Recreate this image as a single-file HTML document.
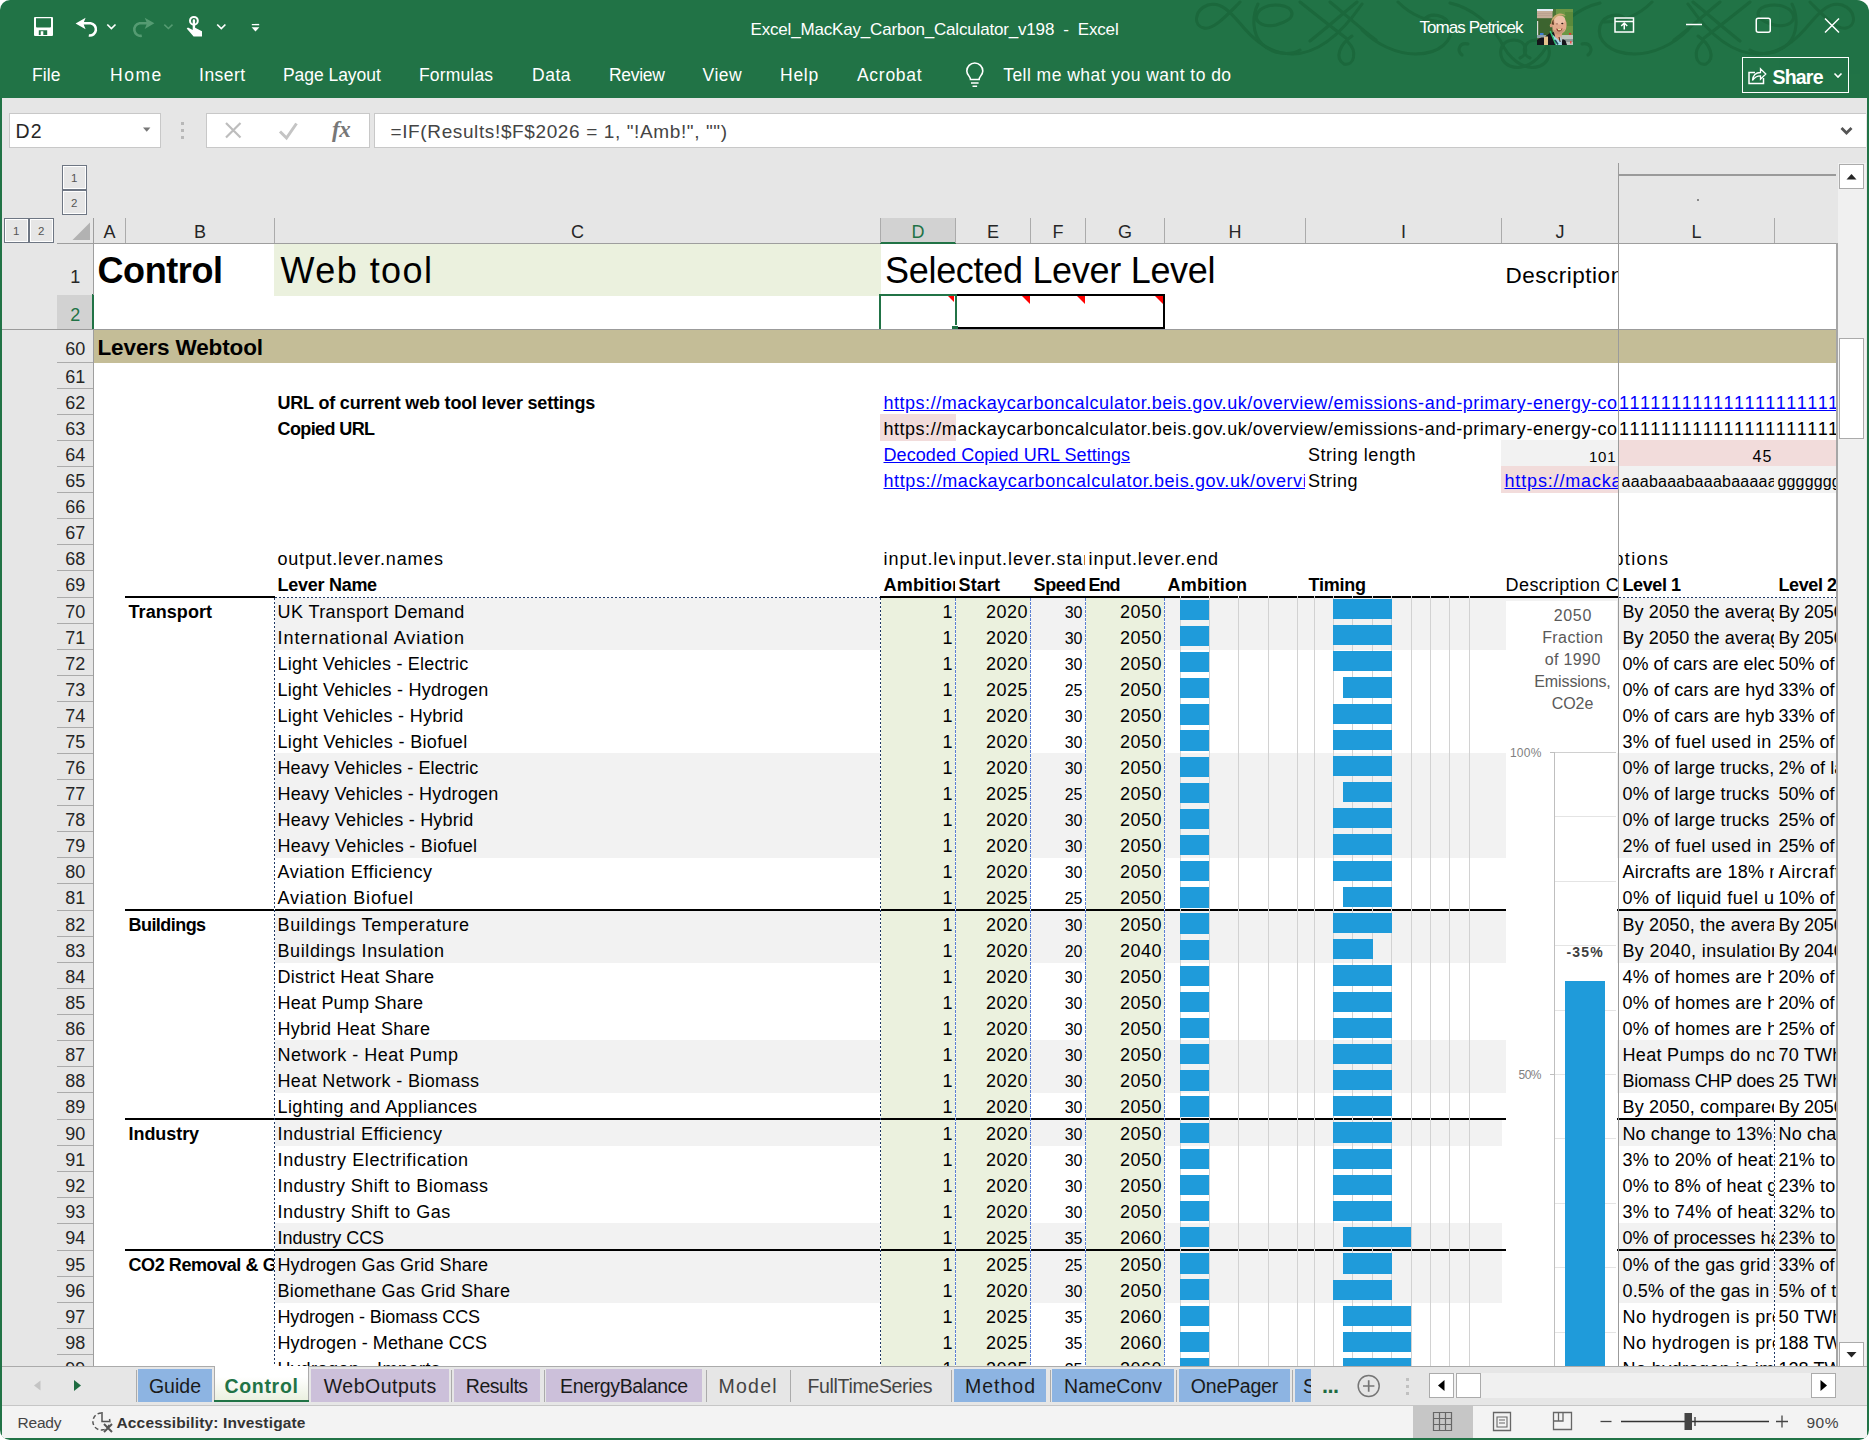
<!DOCTYPE html>
<html><head><meta charset="utf-8"><title>Excel_MacKay_Carbon_Calculator_v198 - Excel</title>
<style>
html,body{margin:0;padding:0;background:#fff;}
body{width:1869px;height:1440px;overflow:hidden;position:relative;font-family:"Liberation Sans",sans-serif;color:#000;}
#win{position:absolute;left:0;top:0;width:1869px;height:1440px;background:#217346;border-radius:10px 12px 10px 10px;overflow:hidden;}
#win div{position:absolute;white-space:nowrap;}
#win svg{position:absolute;overflow:visible;}
.cl{overflow:hidden;}
</style></head><body><div id="win">
<div style="left:2px;top:98px;width:1865px;height:1340px;background:#E6E6E6;"></div><svg style="left:1180px;top:0" width="690" height="98" viewBox="1180 0 690 98" fill="none" stroke="#1B673B" stroke-width="3" stroke-linecap="round" opacity="0.9">
<g><path d="M1240 2C1228 14 1214 30 1204 28C1193 26 1194 10 1208 5C1222 1 1232 14 1244 28C1256 42 1272 54 1292 54C1320 54 1344 30 1362 4"/>
<path d="M1292 14C1292 4 1270 2 1260 10C1250 20 1262 28 1276 25C1286 22 1292 18 1292 14"/>
<path d="M1258 4C1252 16 1252 34 1262 44C1272 54 1290 56 1300 50"/>
<path d="M1300 2C1315 14 1330 26 1346 38"/>
<path d="M1357 2C1340 16 1324 30 1310 41"/>
<path d="M1330 2C1345 14 1362 30 1376 40"/>
<path d="M1352 36C1340 44 1334 58 1344 64C1354 66 1358 52 1348 42"/>
<path d="M1362 30C1376 44 1396 54 1416 54C1440 54 1454 40 1450 26C1446 14 1430 12 1424 20"/>
<path d="M1398 2C1408 12 1424 22 1446 22"/>
<path d="M1450 3C1472 8 1490 24 1500 40C1508 58 1524 72 1540 66C1554 60 1552 40 1536 40C1524 40 1520 54 1530 58"/>
<path d="M1468 44C1460 42 1456 50 1462 55"/></g><g transform="translate(3050 0) scale(-1 1)"><path d="M1240 2C1228 14 1214 30 1204 28C1193 26 1194 10 1208 5C1222 1 1232 14 1244 28C1256 42 1272 54 1292 54C1320 54 1344 30 1362 4"/>
<path d="M1292 14C1292 4 1270 2 1260 10C1250 20 1262 28 1276 25C1286 22 1292 18 1292 14"/>
<path d="M1258 4C1252 16 1252 34 1262 44C1272 54 1290 56 1300 50"/>
<path d="M1300 2C1315 14 1330 26 1346 38"/>
<path d="M1357 2C1340 16 1324 30 1310 41"/>
<path d="M1330 2C1345 14 1362 30 1376 40"/>
<path d="M1352 36C1340 44 1334 58 1344 64C1354 66 1358 52 1348 42"/>
<path d="M1362 30C1376 44 1396 54 1416 54C1440 54 1454 40 1450 26C1446 14 1430 12 1424 20"/>
<path d="M1398 2C1408 12 1424 22 1446 22"/>
<path d="M1450 3C1472 8 1490 24 1500 40C1508 58 1524 72 1540 66C1554 60 1552 40 1536 40C1524 40 1520 54 1530 58"/>
<path d="M1468 44C1460 42 1456 50 1462 55"/></g>
</svg><svg style="left:0;top:0" width="300" height="50" viewBox="0 0 300 50" fill="none" stroke="#fff" stroke-width="2">
<!-- save -->
<path d="M35 17h17a1 1 0 0 1 1 1v17a1 1 0 0 1 -1 1h-17a1 1 0 0 1 -1-1v-17a1 1 0 0 1 1-1z M36 18.300v8.300a1 1 0 0 0 1 1h13a1 1 0 0 0 1-1v-8.300z M38.800 30.200v4.800h1.900v-3.800h2.600v3.800h3.900v-4.800z" fill="#fff" stroke="none" fill-rule="evenodd"/>
<!-- undo -->
<path d="M75.700 23.500l9.800-5.700-2.300 4.300h5.300" stroke="none" fill="none"/>
<path d="M75.600 23.500l10-5.800-1.800 4.500v2.600l1.800 4.500z" fill="#fff" stroke="none"/>
<path d="M83 23.200h7.600a6.200 6.200 0 0 1 -1.800 12.300" stroke-width="2.600"/>
<path d="M107.300 24.500l4.100 4 4.100-4" stroke-width="1.700"/>
<!-- redo (dim) -->
<g stroke="#559B72" fill="#559B72">
<path d="M154.400 23.300l-9.700-5.500 1.800 4.300v2.600l-1.800 4.300z" stroke="none"/>
<path d="M147 23.200h-7.400a6.300 6.300 0 0 0 2.200 12.600" stroke-width="2.600" fill="none"/>
<path d="M164.300 24.600l4.100 3.900 4.100-3.900" stroke-width="1.500" fill="none"/>
</g>
<!-- touch -->
<circle cx="193.900" cy="20.800" r="3.900" stroke-width="2"/>
<path d="M192.700 20.500a1.200 1.200 0 0 1 2.400 0v7.300l6.900 3.400v5.300h-8.400l-6.900-8 1.300-1 4.700 2.600z" fill="#fff" stroke="none"/>
<path d="M217.200 24.500l4.100 4 4.100-4" stroke-width="1.700"/>
<!-- customize -->
<path d="M251.800 24.600h7.400" stroke-width="1.400"/>
<path d="M251.600 27.300h7.800l-3.900 4.200z" fill="#fff" stroke="none"/>
</svg><div style="left:750.5px;top:20px;font-size:17px;line-height:19px;letter-spacing:-0.18px;color:#fff;white-space:pre;">Excel_MacKay_Carbon_Calculator_v198  -  Excel</div><div style="left:1419.5px;top:18px;font-size:17px;line-height:19px;letter-spacing:-0.94px;color:#fff;">Tomas Petricek</div><svg style="left:1537px;top:9px" width="36" height="36" viewBox="0 0 36 36">
<rect width="36" height="36" fill="#4B7436"/>
<rect x="19" y="0" width="17" height="27" fill="#6C9645"/>
<rect x="28" y="3" width="8" height="14" fill="#5B8A3B"/>
<rect x="0" y="8" width="15" height="18" fill="#3C642F"/>
<rect x="0" y="0" width="16" height="2.200" fill="#E4ECF6"/>
<rect x="0" y="2" width="15.500" height="7.200" fill="#C5AD99"/>
<rect x="0" y="4" width="15" height="0.600" fill="#B49C8A"/><rect x="0" y="6" width="15" height="0.600" fill="#B49C8A"/>
<rect x="23" y="26" width="13" height="10" fill="#BEC4BE"/>
<rect x="26" y="30" width="10" height="3" fill="#8E9A96"/>
<rect x="32" y="24" width="2.200" height="1.600" fill="#E8302E"/><rect x="33" y="32" width="1.500" height="2.500" fill="#E8504A"/>
<rect x="0" y="12" width="1.200" height="14" fill="#D9DCD6"/>
<rect x="3" y="24" width="3.500" height="2.500" fill="#3E7ED0"/>
<rect x="0" y="26" width="9" height="3" fill="#8FA0A8"/>
<path d="M0 36v-5c2-2 4-2.500 6-2.500h1l6-4.500 5-1 6 13z" fill="#15151B"/>
<path d="M24 36l1.500-6 3 1.500 1.500 4.500z" fill="#15151B"/>
<rect x="7" y="27.500" width="4" height="8.500" fill="#E3C28C"/>
<path d="M16.500 21l8.500 3-1 12h-4z" fill="#DDA184"/>
<path d="M15 25l4 11h6l-1-10-1.500 6z" fill="#A8D7E8"/>
<path d="M22 28l1.200 5" stroke="#4A2A1C" stroke-width="1"/>
<path d="M13.200 22l5.600 13.500" stroke="#2FCB78" stroke-width="1.400" fill="none"/>
<path d="M18 31l3 4.500" stroke="#1E4E5A" stroke-width="1.600" fill="none"/>
<ellipse cx="22.300" cy="16" rx="7.300" ry="9.300" fill="#E2A98C"/>
<ellipse cx="22.800" cy="11" rx="5.500" ry="4.500" fill="#EDBFA6"/>
<path d="M15 20c1.500 4 4.500 6 7.500 5.500 2.500-0.500 4.500-3 5.500-6-3 2.500-9 3-13 0.500z" fill="#C9977A"/>
<path d="M14.300 15c-0.600-4.500 2-8.500 6.500-10 3.500-1 6.500 0 8 2-4-1.500-8-0.500-10.500 2-1.800 1.800-2.500 4-2.500 6z" fill="#CBAA72"/>
<path d="M14.800 15.500c0-2 0.600-4 1.800-5.200-0.200 2 0 3.800 0.500 5.500z" fill="#5E3C24"/>
<ellipse cx="14" cy="16.500" rx="1.200" ry="2" fill="#D99C80"/>
<ellipse cx="25.300" cy="14.500" rx="1.100" ry="0.800" fill="#2A1915"/>
<ellipse cx="20" cy="14.800" rx="0.900" ry="0.600" fill="#8A5A4A"/>
<path d="M19.300 19.500c2 1 4.500 1 6.200-0.300-0.500 2.300-2 3.300-3.500 3.300-1.400 0-2.400-1.200-2.700-3z" fill="#7C2B24"/>
<rect x="20.800" y="20" width="3.400" height="1.300" fill="#E7DE9C"/>
</svg><svg style="left:1600px;top:0" width="269" height="50" viewBox="1600 0 269 50" fill="none" stroke="#fff" stroke-width="1.500">
<rect x="1615" y="18" width="18.500" height="14" />
<path d="M1615 21.500h18.500" />
<path d="M1624.250 29.500v-6M1621.250 26l3-3 3 3" />
<path d="M1686 24.500h16"/>
<rect x="1756.250" y="18.250" width="14" height="14" rx="2"/>
<path d="M1825 18.500l14 14M1839 18.500l-14 14"/>
</svg><div style="left:31.9px;top:65px;font-size:17.5px;line-height:20px;letter-spacing:0.10px;color:#fff;">File</div><div style="left:110.1px;top:65px;font-size:17.5px;line-height:20px;letter-spacing:1.47px;color:#fff;">Home</div><div style="left:199.1px;top:65px;font-size:17.5px;line-height:20px;letter-spacing:0.43px;color:#fff;">Insert</div><div style="left:283.0px;top:65px;font-size:17.5px;line-height:20px;letter-spacing:-0.05px;color:#fff;">Page Layout</div><div style="left:418.9px;top:65px;font-size:17.5px;line-height:20px;letter-spacing:0.18px;color:#fff;">Formulas</div><div style="left:532.1px;top:65px;font-size:17.5px;line-height:20px;letter-spacing:0.48px;color:#fff;">Data</div><div style="left:608.9px;top:65px;font-size:17.5px;line-height:20px;letter-spacing:-0.28px;color:#fff;">Review</div><div style="left:702.5px;top:65px;font-size:17.5px;line-height:20px;letter-spacing:0.53px;color:#fff;">View</div><div style="left:780.1px;top:65px;font-size:17.5px;line-height:20px;letter-spacing:0.70px;color:#fff;">Help</div><div style="left:856.9px;top:65px;font-size:17.5px;line-height:20px;letter-spacing:0.75px;color:#fff;">Acrobat</div><div style="left:1003.2px;top:65px;font-size:17.5px;line-height:20px;letter-spacing:0.46px;color:#fff;">Tell me what you want to do</div><svg style="left:960px;top:60px" width="30" height="30" viewBox="960 60 30 30" fill="none" stroke="#fff" stroke-width="1.600">
<path d="M970.500 79.500c0-3-3.700-4.500-3.700-8.500a8 8 0 0 1 16 0c0 4-3.700 5.500-3.700 8.500z"/>
<path d="M971 83h7.600M972.500 86.300h4.600"/>
</svg><div style="left:1742px;top:57px;width:107px;height:36px;border:1px solid #fff;box-sizing:border-box;"></div><div style="left:1772.5px;top:66px;font-size:19.5px;line-height:22px;letter-spacing:-0.80px;font-weight:bold;color:#fff;">Share</div><svg style="left:1745px;top:60px" width="100" height="30" viewBox="1745 60 100 30" fill="none" stroke="#fff" stroke-width="1.500">
<path d="M1755 72.500h-6v11h14.500v-5.500"/>
<path d="M1752.500 80.500c0.500-5.500 3.500-8 8-8v-3.800l5.300 5.300-5.300 5.300v-3.500c-3.500 0-6 1.500-8 4.700z" stroke-width="1.300"/>
<path d="M1834.500 73.500l3.500 3.500 3.500-3.500" stroke-width="1.600"/>
</svg><div style="left:9px;top:113px;width:152px;height:35px;background:#fff;border:1px solid #C8C8C8;box-sizing:border-box;"></div><div style="left:15.5px;top:120px;font-size:19.5px;line-height:22px;letter-spacing:1.07px;color:#262626;">D2</div><svg style="left:140px;top:125px" width="14" height="10" viewBox="140 125 14 10"><path d="M143 127.500h7.400l-3.700 4.200z" fill="#777"/></svg><div style="left:181px;top:122px;width:3px;height:3px;background:#B8B8B8;"></div><div style="left:181px;top:129px;width:3px;height:3px;background:#B8B8B8;"></div><div style="left:181px;top:136px;width:3px;height:3px;background:#B8B8B8;"></div><div style="left:206px;top:113px;width:164px;height:35px;background:#fff;border:1px solid #C8C8C8;box-sizing:border-box;"></div><svg style="left:206px;top:113px" width="164" height="35" viewBox="206 113 164 35" fill="none" stroke="#BDBDBD" stroke-width="2.200">
<path d="M226 123l14.500 14.500M240.500 123l-14.500 14.500"/>
<path d="M280 131.500l6.500 6.500 10-14.500" stroke="#C4C4C4" stroke-width="3"/>
</svg><div style="left:332px;top:115px;font-family:'Liberation Serif',serif;font-style:italic;font-weight:bold;font-size:23px;line-height:30px;color:#777;letter-spacing:-0.5px;">fx</div><div style="left:374px;top:113px;width:1492px;height:35px;background:#fff;border:1px solid #C8C8C8;border-right:none;box-sizing:border-box;"></div><div style="left:390.5px;top:121px;font-size:19px;line-height:21px;letter-spacing:0.62px;color:#444;">=IF(Results!$F$2026 = 1, "!Amb!", "")</div><svg style="left:1838px;top:122px" width="18" height="16" viewBox="1838 122 18 16"><path d="M1841.500 128l5 5 5-5" fill="none" stroke="#555" stroke-width="2.800"/></svg><div style="left:62px;top:165px;width:25px;height:25px;background:#E6E6E6;border:1px solid #6E7683;box-sizing:border-box;box-shadow:inset 0 0 0 1px #fff;"></div><div style="left:71.0px;top:172px;font-size:11.5px;line-height:12px;letter-spacing:-0.04px;color:#555;">1</div><div style="left:62px;top:190px;width:25px;height:25px;background:#E6E6E6;border:1px solid #6E7683;box-sizing:border-box;box-shadow:inset 0 0 0 1px #fff;"></div><div style="left:71.0px;top:197px;font-size:11.5px;line-height:12px;letter-spacing:-0.04px;color:#555;">2</div><div style="left:4px;top:218px;width:25px;height:25px;background:#E6E6E6;border:1px solid #6E7683;box-sizing:border-box;box-shadow:inset 0 0 0 1px #fff;"></div><div style="left:13.0px;top:225px;font-size:11.5px;line-height:12px;letter-spacing:-0.04px;color:#555;">1</div><div style="left:29px;top:218px;width:25px;height:25px;background:#E6E6E6;border:1px solid #6E7683;box-sizing:border-box;box-shadow:inset 0 0 0 1px #fff;"></div><div style="left:38.0px;top:225px;font-size:11.5px;line-height:12px;letter-spacing:-0.04px;color:#555;">2</div><div style="left:1619px;top:174px;width:217px;height:2px;background:#9A9A9A;"></div><div style="left:1696.5px;top:199px;width:2px;height:2px;background:#8A8A8A;"></div><div style="left:57px;top:243px;width:1780px;height:1px;background:#9E9E9E;"></div><svg style="left:72px;top:222px" width="20" height="20" viewBox="72 222 20 20"><path d="M90 222.500v17.500h-17.500z" fill="#B2B2B2"/></svg><div style="left:881px;top:218px;width:75px;height:25px;background:#D2D2D2;"></div><div style="left:880px;top:242px;width:76px;height:2px;background:#217346;"></div><div style="left:125px;top:218px;width:1px;height:25px;background:#ABABAB;"></div><div style="left:103.5px;top:222px;font-size:18px;line-height:20px;letter-spacing:-0.01px;color:#262626;">A</div><div style="left:274px;top:218px;width:1px;height:25px;background:#ABABAB;"></div><div style="left:194.0px;top:222px;font-size:18px;line-height:20px;letter-spacing:-1.01px;color:#262626;">B</div><div style="left:880px;top:218px;width:1px;height:25px;background:#ABABAB;"></div><div style="left:571.0px;top:222px;font-size:18px;line-height:20px;letter-spacing:-1.60px;color:#262626;">C</div><div style="left:955px;top:218px;width:1px;height:25px;background:#ABABAB;"></div><div style="left:911.5px;top:222px;font-size:18px;line-height:20px;letter-spacing:-1.00px;color:#217346;">D</div><div style="left:1030px;top:218px;width:1px;height:25px;background:#ABABAB;"></div><div style="left:987.0px;top:222px;font-size:18px;line-height:20px;letter-spacing:-1.60px;color:#262626;">E</div><div style="left:1085px;top:218px;width:1px;height:25px;background:#ABABAB;"></div><div style="left:1052.5px;top:222px;font-size:18px;line-height:20px;letter-spacing:-1.60px;color:#262626;">F</div><div style="left:1164px;top:218px;width:1px;height:25px;background:#ABABAB;"></div><div style="left:1118.0px;top:222px;font-size:18px;line-height:20px;letter-spacing:-1.00px;color:#262626;">G</div><div style="left:1305px;top:218px;width:1px;height:25px;background:#ABABAB;"></div><div style="left:1228.5px;top:222px;font-size:18px;line-height:20px;letter-spacing:-1.00px;color:#262626;">H</div><div style="left:1501px;top:218px;width:1px;height:25px;background:#ABABAB;"></div><div style="left:1401.0px;top:222px;font-size:18px;line-height:20px;letter-spacing:-0.00px;color:#262626;">I</div><div style="left:1618px;top:218px;width:1px;height:25px;background:#ABABAB;"></div><div style="left:1555.5px;top:222px;font-size:18px;line-height:20px;letter-spacing:-1.60px;color:#262626;">J</div><div style="left:1774px;top:218px;width:1px;height:25px;background:#ABABAB;"></div><div style="left:1691.5px;top:222px;font-size:18px;line-height:20px;letter-spacing:-1.60px;color:#262626;">L</div><div style="left:57px;top:295px;width:36px;height:34px;background:#D2D2D2;"></div><div style="left:92px;top:294px;width:2px;height:35px;background:#217346;"></div><div class="cl" style="left:2px;top:244px;width:92px;height:1122px;"><div style="left:-2px;top:-244px;"><div style="left:70.2px;top:267px;font-size:18px;line-height:20px;letter-spacing:-0.01px;color:#262626;">1</div><div style="left:70.2px;top:305px;font-size:18px;line-height:20px;letter-spacing:-0.01px;color:#217346;">2</div><div style="left:57px;top:362px;width:36px;height:1px;background:#ABABAB;"></div><div style="left:65.2px;top:339px;font-size:18px;line-height:20px;letter-spacing:-0.02px;color:#262626;">60</div><div style="left:57px;top:388px;width:36px;height:1px;background:#ABABAB;"></div><div style="left:65.2px;top:367px;font-size:18px;line-height:20px;letter-spacing:-0.02px;color:#262626;">61</div><div style="left:57px;top:414px;width:36px;height:1px;background:#ABABAB;"></div><div style="left:65.2px;top:393px;font-size:18px;line-height:20px;letter-spacing:-0.02px;color:#262626;">62</div><div style="left:57px;top:440px;width:36px;height:1px;background:#ABABAB;"></div><div style="left:65.2px;top:419px;font-size:18px;line-height:20px;letter-spacing:-0.02px;color:#262626;">63</div><div style="left:57px;top:466px;width:36px;height:1px;background:#ABABAB;"></div><div style="left:65.2px;top:445px;font-size:18px;line-height:20px;letter-spacing:-0.02px;color:#262626;">64</div><div style="left:57px;top:492px;width:36px;height:1px;background:#ABABAB;"></div><div style="left:65.2px;top:471px;font-size:18px;line-height:20px;letter-spacing:-0.02px;color:#262626;">65</div><div style="left:57px;top:518px;width:36px;height:1px;background:#ABABAB;"></div><div style="left:65.2px;top:497px;font-size:18px;line-height:20px;letter-spacing:-0.02px;color:#262626;">66</div><div style="left:57px;top:544px;width:36px;height:1px;background:#ABABAB;"></div><div style="left:65.2px;top:523px;font-size:18px;line-height:20px;letter-spacing:-0.02px;color:#262626;">67</div><div style="left:57px;top:570px;width:36px;height:1px;background:#ABABAB;"></div><div style="left:65.2px;top:549px;font-size:18px;line-height:20px;letter-spacing:-0.02px;color:#262626;">68</div><div style="left:57px;top:597px;width:36px;height:1px;background:#ABABAB;"></div><div style="left:65.2px;top:575px;font-size:18px;line-height:20px;letter-spacing:-0.02px;color:#262626;">69</div><div style="left:57px;top:623px;width:36px;height:1px;background:#ABABAB;"></div><div style="left:65.2px;top:602px;font-size:18px;line-height:20px;letter-spacing:-0.02px;color:#262626;">70</div><div style="left:57px;top:649px;width:36px;height:1px;background:#ABABAB;"></div><div style="left:65.2px;top:628px;font-size:18px;line-height:20px;letter-spacing:-0.02px;color:#262626;">71</div><div style="left:57px;top:675px;width:36px;height:1px;background:#ABABAB;"></div><div style="left:65.2px;top:654px;font-size:18px;line-height:20px;letter-spacing:-0.02px;color:#262626;">72</div><div style="left:57px;top:701px;width:36px;height:1px;background:#ABABAB;"></div><div style="left:65.2px;top:680px;font-size:18px;line-height:20px;letter-spacing:-0.02px;color:#262626;">73</div><div style="left:57px;top:727px;width:36px;height:1px;background:#ABABAB;"></div><div style="left:65.2px;top:706px;font-size:18px;line-height:20px;letter-spacing:-0.02px;color:#262626;">74</div><div style="left:57px;top:753px;width:36px;height:1px;background:#ABABAB;"></div><div style="left:65.2px;top:732px;font-size:18px;line-height:20px;letter-spacing:-0.02px;color:#262626;">75</div><div style="left:57px;top:779px;width:36px;height:1px;background:#ABABAB;"></div><div style="left:65.2px;top:758px;font-size:18px;line-height:20px;letter-spacing:-0.02px;color:#262626;">76</div><div style="left:57px;top:805px;width:36px;height:1px;background:#ABABAB;"></div><div style="left:65.2px;top:784px;font-size:18px;line-height:20px;letter-spacing:-0.02px;color:#262626;">77</div><div style="left:57px;top:831px;width:36px;height:1px;background:#ABABAB;"></div><div style="left:65.2px;top:810px;font-size:18px;line-height:20px;letter-spacing:-0.02px;color:#262626;">78</div><div style="left:57px;top:857px;width:36px;height:1px;background:#ABABAB;"></div><div style="left:65.2px;top:836px;font-size:18px;line-height:20px;letter-spacing:-0.02px;color:#262626;">79</div><div style="left:57px;top:883px;width:36px;height:1px;background:#ABABAB;"></div><div style="left:65.2px;top:862px;font-size:18px;line-height:20px;letter-spacing:-0.02px;color:#262626;">80</div><div style="left:57px;top:910px;width:36px;height:1px;background:#ABABAB;"></div><div style="left:65.2px;top:888px;font-size:18px;line-height:20px;letter-spacing:-0.02px;color:#262626;">81</div><div style="left:57px;top:936px;width:36px;height:1px;background:#ABABAB;"></div><div style="left:65.2px;top:915px;font-size:18px;line-height:20px;letter-spacing:-0.02px;color:#262626;">82</div><div style="left:57px;top:962px;width:36px;height:1px;background:#ABABAB;"></div><div style="left:65.2px;top:941px;font-size:18px;line-height:20px;letter-spacing:-0.02px;color:#262626;">83</div><div style="left:57px;top:988px;width:36px;height:1px;background:#ABABAB;"></div><div style="left:65.2px;top:967px;font-size:18px;line-height:20px;letter-spacing:-0.02px;color:#262626;">84</div><div style="left:57px;top:1014px;width:36px;height:1px;background:#ABABAB;"></div><div style="left:65.2px;top:993px;font-size:18px;line-height:20px;letter-spacing:-0.02px;color:#262626;">85</div><div style="left:57px;top:1040px;width:36px;height:1px;background:#ABABAB;"></div><div style="left:65.2px;top:1019px;font-size:18px;line-height:20px;letter-spacing:-0.02px;color:#262626;">86</div><div style="left:57px;top:1066px;width:36px;height:1px;background:#ABABAB;"></div><div style="left:65.2px;top:1045px;font-size:18px;line-height:20px;letter-spacing:-0.02px;color:#262626;">87</div><div style="left:57px;top:1092px;width:36px;height:1px;background:#ABABAB;"></div><div style="left:65.2px;top:1071px;font-size:18px;line-height:20px;letter-spacing:-0.02px;color:#262626;">88</div><div style="left:57px;top:1119px;width:36px;height:1px;background:#ABABAB;"></div><div style="left:65.2px;top:1097px;font-size:18px;line-height:20px;letter-spacing:-0.02px;color:#262626;">89</div><div style="left:57px;top:1145px;width:36px;height:1px;background:#ABABAB;"></div><div style="left:65.2px;top:1124px;font-size:18px;line-height:20px;letter-spacing:-0.02px;color:#262626;">90</div><div style="left:57px;top:1171px;width:36px;height:1px;background:#ABABAB;"></div><div style="left:65.2px;top:1150px;font-size:18px;line-height:20px;letter-spacing:-0.02px;color:#262626;">91</div><div style="left:57px;top:1197px;width:36px;height:1px;background:#ABABAB;"></div><div style="left:65.2px;top:1176px;font-size:18px;line-height:20px;letter-spacing:-0.02px;color:#262626;">92</div><div style="left:57px;top:1223px;width:36px;height:1px;background:#ABABAB;"></div><div style="left:65.2px;top:1202px;font-size:18px;line-height:20px;letter-spacing:-0.02px;color:#262626;">93</div><div style="left:57px;top:1250px;width:36px;height:1px;background:#ABABAB;"></div><div style="left:65.2px;top:1228px;font-size:18px;line-height:20px;letter-spacing:-0.02px;color:#262626;">94</div><div style="left:57px;top:1276px;width:36px;height:1px;background:#ABABAB;"></div><div style="left:65.2px;top:1255px;font-size:18px;line-height:20px;letter-spacing:-0.02px;color:#262626;">95</div><div style="left:57px;top:1302px;width:36px;height:1px;background:#ABABAB;"></div><div style="left:65.2px;top:1281px;font-size:18px;line-height:20px;letter-spacing:-0.02px;color:#262626;">96</div><div style="left:57px;top:1328px;width:36px;height:1px;background:#ABABAB;"></div><div style="left:65.2px;top:1307px;font-size:18px;line-height:20px;letter-spacing:-0.02px;color:#262626;">97</div><div style="left:57px;top:1354px;width:36px;height:1px;background:#ABABAB;"></div><div style="left:65.2px;top:1333px;font-size:18px;line-height:20px;letter-spacing:-0.02px;color:#262626;">98</div><div style="left:65.2px;top:1359px;font-size:18px;line-height:20px;letter-spacing:-0.02px;color:#262626;">99</div></div></div><div style="left:93px;top:218px;width:1px;height:77px;background:#9E9E9E;"></div><div style="left:93px;top:329px;width:1px;height:1037px;background:#9E9E9E;"></div><div style="left:1838px;top:163px;width:28px;height:1204px;background:#F0F0F0;"></div><div style="left:1839px;top:164px;width:25px;height:25px;background:#fff;border:1px solid #ABABAB;box-sizing:border-box;"></div><div style="left:1839px;top:1342px;width:25px;height:25px;background:#fff;border:1px solid #ABABAB;box-sizing:border-box;"></div><div style="left:1839px;top:338px;width:25px;height:101px;background:#fff;border:1px solid #ABABAB;box-sizing:border-box;"></div><svg style="left:1839px;top:164px" width="25" height="1203" viewBox="1839 164 25 1203" fill="#262626">
<path d="M1846.500 179.500l5-5.500 5 5.500z"/><path d="M1846.500 1352l5 5.500 5-5.500z"/></svg><div style="left:2px;top:1366px;width:1865px;height:1px;background:#ABABAB;"></div><div style="left:2px;top:1367px;width:1865px;height:39px;background:#E6E6E6;"></div><div style="left:2px;top:1405px;width:1865px;height:1px;background:#C6C6C6;"></div><svg style="left:30px;top:1376px" width="60" height="20" viewBox="30 1376 60 20">
<path d="M40.500 1380.500v10l-6.500-5z" fill="#C4C4C4"/><path d="M74 1380v11l7-5.500z" fill="#1E6B41"/></svg><div style="left:136px;top:1370px;width:1px;height:32px;background:#ABABAB;"></div><div style="left:138px;top:1369px;width:74px;height:33px;background:#8DB4E2;"></div><div style="left:148.9px;top:1375px;font-size:19.5px;line-height:22px;letter-spacing:0.02px;color:#1a1a1a;">Guide</div><div style="left:311px;top:1369px;width:138px;height:33px;background:#CCC0DA;"></div><div style="left:323.8px;top:1375px;font-size:19.5px;line-height:22px;letter-spacing:0.49px;color:#1a1a1a;">WebOutputs</div><div style="left:454px;top:1369px;width:86px;height:33px;background:#CCC0DA;"></div><div style="left:465.8px;top:1375px;font-size:19.5px;line-height:22px;letter-spacing:-0.45px;color:#1a1a1a;">Results</div><div style="left:546px;top:1369px;width:156px;height:33px;background:#CCC0DA;"></div><div style="left:560.0px;top:1375px;font-size:19.5px;line-height:22px;letter-spacing:-0.35px;color:#1a1a1a;">EnergyBalance</div><div style="left:954px;top:1369px;width:92px;height:33px;background:#8DB4E2;"></div><div style="left:965.0px;top:1375px;font-size:19.5px;line-height:22px;letter-spacing:1.00px;color:#1a1a1a;">Method</div><div style="left:1052px;top:1369px;width:122px;height:33px;background:#8DB4E2;"></div><div style="left:1064.1px;top:1375px;font-size:19.5px;line-height:22px;letter-spacing:0.04px;color:#1a1a1a;">NameConv</div><div style="left:1179px;top:1369px;width:111px;height:33px;background:#8DB4E2;"></div><div style="left:1190.8px;top:1375px;font-size:19.5px;line-height:22px;letter-spacing:-0.21px;color:#1a1a1a;">OnePager</div><div style="left:451px;top:1370px;width:1px;height:32px;background:#ABABAB;"></div><div style="left:544px;top:1370px;width:1px;height:32px;background:#ABABAB;"></div><div style="left:706px;top:1370px;width:1px;height:32px;background:#ABABAB;"></div><div style="left:790px;top:1370px;width:1px;height:32px;background:#ABABAB;"></div><div style="left:951px;top:1370px;width:1px;height:32px;background:#ABABAB;"></div><div style="left:1050px;top:1370px;width:1px;height:32px;background:#ABABAB;"></div><div style="left:1176px;top:1370px;width:1px;height:32px;background:#ABABAB;"></div><div style="left:1292px;top:1370px;width:1px;height:32px;background:#ABABAB;"></div><div style="left:718.6px;top:1375px;font-size:19.5px;line-height:22px;letter-spacing:1.22px;color:#444;">Model</div><div style="left:807.5px;top:1375px;font-size:19.5px;line-height:22px;letter-spacing:-0.33px;color:#444;">FullTimeSeries</div><div class="cl" style="left:1295px;top:1369px;width:16px;height:33px;"><div style="left:-1295px;top:-1369px;"><div style="left:1295px;top:1369px;width:40px;height:33px;background:#8DB4E2;"></div><div style="left:1303.0px;top:1375px;font-size:19.5px;line-height:22px;letter-spacing:-0.39px;color:#1a1a1a;">SeriesNames</div></div></div><div style="left:1322.0px;top:1374px;font-size:21.5px;line-height:24px;letter-spacing:-0.46px;font-weight:bold;color:#1E6B41;">...</div><svg style="left:1355px;top:1372px" width="30" height="30" viewBox="1355 1372 30 30" fill="none" stroke="#767676" stroke-width="1.500">
<circle cx="1368.700" cy="1386" r="10.500"/><path d="M1363 1386h11.400M1368.700 1380.300v11.400" stroke-width="1.700"/></svg><div style="left:1406px;top:1378px;width:3px;height:3px;background:#C0C0C0;"></div><div style="left:1406px;top:1385px;width:3px;height:3px;background:#C0C0C0;"></div><div style="left:1406px;top:1392px;width:3px;height:3px;background:#C0C0C0;"></div><div style="left:214px;top:1366px;width:95px;height:36px;background:linear-gradient(#fff 0%,#fff 30%,#E9EFDD 100%);border-left:1px solid #ABABAB;border-right:1px solid #ABABAB;box-sizing:border-box;"></div><div style="left:214px;top:1400px;width:95px;height:2px;background:#217346;"></div><div style="left:224.4px;top:1375px;font-size:19.5px;line-height:22px;letter-spacing:0.70px;font-weight:bold;color:#217346;">Control</div><div style="left:1429px;top:1373px;width:407px;height:25px;background:#F0F0F0;"></div><div style="left:1429px;top:1373px;width:25px;height:25px;background:#fff;border:1px solid #ABABAB;box-sizing:border-box;"></div><div style="left:1811px;top:1373px;width:25px;height:25px;background:#fff;border:1px solid #ABABAB;box-sizing:border-box;"></div><div style="left:1456px;top:1373px;width:25px;height:25px;background:#fff;border:1px solid #ABABAB;box-sizing:border-box;"></div><svg style="left:1429px;top:1373px" width="407" height="25" viewBox="1429 1373 407 25" fill="#000">
<path d="M1444.500 1380v11l-6.500-5.500z"/><path d="M1820.500 1380v11l6.500-5.500z"/></svg><div style="left:2px;top:1406px;width:1865px;height:32px;background:#F3F3F3;"></div><div style="left:17.5px;top:1414px;font-size:15.5px;line-height:17px;letter-spacing:-0.20px;color:#444;">Ready</div><div style="left:116.5px;top:1414px;font-size:15.5px;line-height:17px;letter-spacing:0.15px;font-weight:bold;color:#333;">Accessibility: Investigate</div><svg style="left:88px;top:1408px" width="30" height="30" viewBox="88 1408 30 30" fill="none" stroke="#555" stroke-width="1.500">
<path d="M101.500 1413a8.500 8.500 0 1 0 8 6" stroke-dasharray="4 2.500"/><path d="M102 1412v9.500h7"/>
<path d="M104 1424l8 8M112 1424l-8 8" stroke-width="2"/></svg><div style="left:1413px;top:1406px;width:60px;height:32px;background:#C6C6C6;"></div><svg style="left:1413px;top:1406px" width="440" height="32" viewBox="1413 1406 440 32" fill="none" stroke="#666" stroke-width="1.300">
<path d="M1433.500 1412.500h18v18h-18zM1433.500 1418.500h18M1433.500 1424.500h18M1439.500 1412.500v18M1445.500 1412.500v18" stroke-width="1.200"/>
<path d="M1493.500 1412.500h17v18h-17z"/><path d="M1497 1417h10v10h-10zM1499 1420h6M1499 1423h6" stroke-width="1.100"/>
<path d="M1553.500 1412.500h18v17h-18zM1553.500 1421h9.500v-8.500M1558.500 1412.500v8.500"/>
<path d="M1600.500 1421.500h11" stroke="#444"/><path d="M1776 1421.500h12M1782 1415.500v12" stroke="#444"/>
<path d="M1621 1421.500h148" stroke="#333" stroke-width="1.600"/><path d="M1695 1417v9" stroke="#333" stroke-width="1.300"/>
<rect x="1684.500" y="1413" width="7.500" height="17" fill="#444" stroke="none"/>
</svg><div style="left:1806.5px;top:1414px;font-size:15.5px;line-height:17px;letter-spacing:0.49px;color:#444;">90%</div><div style="left:94px;top:244px;width:1742px;height:1122px;background:#fff;"></div><div style="left:1836px;top:243px;width:2px;height:1123px;background:#A6A6A6;"></div><div class="cl" style="left:94px;top:244px;width:1742px;height:1122px;"><div style="left:-94px;top:-244px;"><div style="left:274px;top:244px;width:607px;height:52px;background:#EBF1DE;"></div><div style="left:94px;top:330px;width:1742px;height:33px;background:#C4BD97;"></div><div style="left:880px;top:414px;width:76px;height:27px;background:#F2DCDB;"></div><div style="left:1501px;top:440px;width:118px;height:27px;background:#F2F2F2;"></div><div style="left:1618px;top:440px;width:219px;height:27px;background:#F2DCDB;"></div><div style="left:1501px;top:466px;width:118px;height:27px;background:#F2DCDB;"></div><div style="left:1618px;top:466px;width:219px;height:27px;background:#F2F2F2;"></div><div style="left:274px;top:597px;width:1345px;height:53px;background:#F2F2F2;"></div><div style="left:1618px;top:597px;width:219px;height:53px;background:#F2F2F2;"></div><div style="left:274px;top:753px;width:1345px;height:105px;background:#F2F2F2;"></div><div style="left:1618px;top:753px;width:219px;height:105px;background:#F2F2F2;"></div><div style="left:274px;top:910px;width:1345px;height:53px;background:#F2F2F2;"></div><div style="left:1618px;top:910px;width:219px;height:53px;background:#F2F2F2;"></div><div style="left:274px;top:1040px;width:1345px;height:53px;background:#F2F2F2;"></div><div style="left:1618px;top:1040px;width:219px;height:53px;background:#F2F2F2;"></div><div style="left:274px;top:1119px;width:1228px;height:27px;background:#F2F2F2;"></div><div style="left:1618px;top:1119px;width:219px;height:27px;background:#F2F2F2;"></div><div style="left:274px;top:1223px;width:1228px;height:80px;background:#F2F2F2;"></div><div style="left:1618px;top:1223px;width:219px;height:80px;background:#F2F2F2;"></div><div style="left:880px;top:597px;width:76px;height:784px;background:#EBF1DE;"></div><div style="left:955px;top:597px;width:76px;height:784px;background:#EBF1DE;"></div><div style="left:1085px;top:597px;width:80px;height:784px;background:#EBF1DE;"></div><div style="left:125px;top:596px;width:150px;height:2px;background:#000;"></div><div style="left:125px;top:909px;width:1381px;height:2px;background:#000;"></div><div style="left:1616px;top:909px;width:220px;height:2px;background:#000;"></div><div style="left:125px;top:1118px;width:1381px;height:2px;background:#000;"></div><div style="left:1616px;top:1118px;width:220px;height:2px;background:#000;"></div><div style="left:125px;top:1249px;width:1381px;height:2px;background:#000;"></div><div style="left:1616px;top:1249px;width:220px;height:2px;background:#000;"></div><div style="left:275px;top:597px;width:606px;height:1px;background:repeating-linear-gradient(90deg,#1F3864 0,#1F3864 2px,#fff 2px,#fff 4px);"></div><div style="left:1619px;top:597px;width:217px;height:1px;background:repeating-linear-gradient(90deg,#1F3864 0,#1F3864 2px,#fff 2px,#fff 4px);"></div><div style="left:274px;top:598px;width:1px;height:768px;background:repeating-linear-gradient(180deg,#1F3864 0,#1F3864 2px,#fff 2px,#fff 4px);"></div><div style="left:880px;top:598px;width:1px;height:768px;background:repeating-linear-gradient(180deg,#1F3864 0,#1F3864 2px,#fff 2px,#fff 4px);"></div><div style="left:955px;top:598px;width:1px;height:768px;background:repeating-linear-gradient(180deg,#5B7FD3 0,#5B7FD3 3px,#fff 3px,#fff 4px);"></div><div style="left:1030px;top:598px;width:1px;height:768px;background:repeating-linear-gradient(180deg,#5B7FD3 0,#5B7FD3 3px,#fff 3px,#fff 4px);"></div><div style="left:1085px;top:598px;width:1px;height:768px;background:repeating-linear-gradient(180deg,#5B7FD3 0,#5B7FD3 3px,#fff 3px,#fff 4px);"></div><div style="left:1164px;top:598px;width:1px;height:768px;background:repeating-linear-gradient(180deg,#5B7FD3 0,#5B7FD3 3px,#fff 3px,#fff 4px);"></div><div style="left:1774px;top:1120px;width:1px;height:246px;background:repeating-linear-gradient(180deg,#1F3864 0,#1F3864 2px,#fff 2px,#fff 4px);"></div><div style="left:880px;top:596px;width:739px;height:2px;background:#000;"></div><div style="left:1180px;top:596px;width:1px;height:770px;background:#D2D2D2;"></div><div style="left:1209px;top:596px;width:1px;height:770px;background:#D2D2D2;"></div><div style="left:1238px;top:596px;width:1px;height:770px;background:#D2D2D2;"></div><div style="left:1268px;top:596px;width:1px;height:770px;background:#D2D2D2;"></div><div style="left:1297px;top:596px;width:1px;height:770px;background:#D2D2D2;"></div><div style="left:1314px;top:596px;width:1px;height:770px;background:#D2D2D2;"></div><div style="left:1333px;top:596px;width:1px;height:770px;background:#D2D2D2;"></div><div style="left:1352px;top:596px;width:1px;height:770px;background:#D2D2D2;"></div><div style="left:1372px;top:596px;width:1px;height:770px;background:#D2D2D2;"></div><div style="left:1391px;top:596px;width:1px;height:770px;background:#D2D2D2;"></div><div style="left:1411px;top:596px;width:1px;height:770px;background:#D2D2D2;"></div><div style="left:1430px;top:596px;width:1px;height:770px;background:#D2D2D2;"></div><div style="left:1449px;top:596px;width:1px;height:770px;background:#D2D2D2;"></div><div style="left:1469px;top:596px;width:1px;height:770px;background:#D2D2D2;"></div><div style="left:1180px;top:599.6px;width:29px;height:20.4px;background:#1F9BDA;"></div><div style="left:1333px;top:598.8px;width:58.5px;height:20.3px;background:#1F9BDA;"></div><div style="left:1180px;top:625.7px;width:29px;height:20.4px;background:#1F9BDA;"></div><div style="left:1333px;top:625px;width:58.5px;height:20.3px;background:#1F9BDA;"></div><div style="left:1180px;top:651.9px;width:29px;height:20.4px;background:#1F9BDA;"></div><div style="left:1333px;top:651.2px;width:58.5px;height:20.3px;background:#1F9BDA;"></div><div style="left:1180px;top:678px;width:29px;height:20.4px;background:#1F9BDA;"></div><div style="left:1342.5px;top:677.3px;width:49px;height:20.3px;background:#1F9BDA;"></div><div style="left:1180px;top:704.2px;width:29px;height:20.4px;background:#1F9BDA;"></div><div style="left:1333px;top:703.5px;width:58.5px;height:20.3px;background:#1F9BDA;"></div><div style="left:1180px;top:730.3px;width:29px;height:20.4px;background:#1F9BDA;"></div><div style="left:1333px;top:729.7px;width:58.5px;height:20.3px;background:#1F9BDA;"></div><div style="left:1180px;top:756.5px;width:29px;height:20.4px;background:#1F9BDA;"></div><div style="left:1333px;top:755.9px;width:58.5px;height:20.3px;background:#1F9BDA;"></div><div style="left:1180px;top:782.6px;width:29px;height:20.4px;background:#1F9BDA;"></div><div style="left:1342.5px;top:782.1px;width:49px;height:20.3px;background:#1F9BDA;"></div><div style="left:1180px;top:808.8px;width:29px;height:20.4px;background:#1F9BDA;"></div><div style="left:1333px;top:808.2px;width:58.5px;height:20.3px;background:#1F9BDA;"></div><div style="left:1180px;top:834.9px;width:29px;height:20.4px;background:#1F9BDA;"></div><div style="left:1333px;top:834.4px;width:58.5px;height:20.3px;background:#1F9BDA;"></div><div style="left:1180px;top:861.1px;width:29px;height:20.4px;background:#1F9BDA;"></div><div style="left:1333px;top:860.6px;width:58.5px;height:20.3px;background:#1F9BDA;"></div><div style="left:1180px;top:887.2px;width:29px;height:20.4px;background:#1F9BDA;"></div><div style="left:1342.5px;top:886.8px;width:49px;height:20.3px;background:#1F9BDA;"></div><div style="left:1180px;top:913.4px;width:29px;height:20.4px;background:#1F9BDA;"></div><div style="left:1333px;top:913px;width:58.5px;height:20.3px;background:#1F9BDA;"></div><div style="left:1180px;top:939.5px;width:29px;height:20.4px;background:#1F9BDA;"></div><div style="left:1333px;top:939.1px;width:39.5px;height:20.3px;background:#1F9BDA;"></div><div style="left:1180px;top:965.6px;width:29px;height:20.4px;background:#1F9BDA;"></div><div style="left:1333px;top:965.3px;width:58.5px;height:20.3px;background:#1F9BDA;"></div><div style="left:1180px;top:991.8px;width:29px;height:20.4px;background:#1F9BDA;"></div><div style="left:1333px;top:991.5px;width:58.5px;height:20.3px;background:#1F9BDA;"></div><div style="left:1180px;top:1017.9px;width:29px;height:20.4px;background:#1F9BDA;"></div><div style="left:1333px;top:1017.7px;width:58.5px;height:20.3px;background:#1F9BDA;"></div><div style="left:1180px;top:1044.1px;width:29px;height:20.4px;background:#1F9BDA;"></div><div style="left:1333px;top:1043.9px;width:58.5px;height:20.3px;background:#1F9BDA;"></div><div style="left:1180px;top:1070.2px;width:29px;height:20.4px;background:#1F9BDA;"></div><div style="left:1333px;top:1070px;width:58.5px;height:20.3px;background:#1F9BDA;"></div><div style="left:1180px;top:1096.4px;width:29px;height:20.4px;background:#1F9BDA;"></div><div style="left:1333px;top:1096.2px;width:58.5px;height:20.3px;background:#1F9BDA;"></div><div style="left:1180px;top:1122.5px;width:29px;height:20.4px;background:#1F9BDA;"></div><div style="left:1333px;top:1122.4px;width:58.5px;height:20.3px;background:#1F9BDA;"></div><div style="left:1180px;top:1148.7px;width:29px;height:20.4px;background:#1F9BDA;"></div><div style="left:1333px;top:1148.6px;width:58.5px;height:20.3px;background:#1F9BDA;"></div><div style="left:1180px;top:1174.8px;width:29px;height:20.4px;background:#1F9BDA;"></div><div style="left:1333px;top:1174.8px;width:58.5px;height:20.3px;background:#1F9BDA;"></div><div style="left:1180px;top:1201px;width:29px;height:20.4px;background:#1F9BDA;"></div><div style="left:1333px;top:1200.9px;width:58.5px;height:20.3px;background:#1F9BDA;"></div><div style="left:1180px;top:1227.1px;width:29px;height:20.4px;background:#1F9BDA;"></div><div style="left:1342.5px;top:1227.1px;width:68.5px;height:20.3px;background:#1F9BDA;"></div><div style="left:1180px;top:1253.2px;width:29px;height:20.4px;background:#1F9BDA;"></div><div style="left:1342.5px;top:1253.3px;width:49px;height:20.3px;background:#1F9BDA;"></div><div style="left:1180px;top:1279.4px;width:29px;height:20.4px;background:#1F9BDA;"></div><div style="left:1333px;top:1279.5px;width:58.5px;height:20.3px;background:#1F9BDA;"></div><div style="left:1180px;top:1305.5px;width:29px;height:20.4px;background:#1F9BDA;"></div><div style="left:1342.5px;top:1305.7px;width:68.5px;height:20.3px;background:#1F9BDA;"></div><div style="left:1180px;top:1331.7px;width:29px;height:20.4px;background:#1F9BDA;"></div><div style="left:1342.5px;top:1331.8px;width:68.5px;height:20.3px;background:#1F9BDA;"></div><div style="left:1180px;top:1357.8px;width:29px;height:20.4px;background:#1F9BDA;"></div><div style="left:1342.5px;top:1358px;width:68.5px;height:20.3px;background:#1F9BDA;"></div><div style="left:1506px;top:601px;width:111px;height:765px;background:#fff;"></div><div style="left:1553.7px;top:607px;font-size:16px;line-height:17px;letter-spacing:0.67px;color:#595959;">2050</div><div style="left:1542.2px;top:629px;font-size:16px;line-height:17px;letter-spacing:0.40px;color:#595959;">Fraction</div><div style="left:1544.7px;top:651px;font-size:16px;line-height:17px;letter-spacing:0.37px;color:#595959;">of 1990</div><div style="left:1534.2px;top:673px;font-size:16px;line-height:17px;letter-spacing:-0.08px;color:#595959;">Emissions,</div><div style="left:1551.7px;top:695px;font-size:16px;line-height:17px;letter-spacing:-0.07px;color:#595959;">CO2e</div><div style="left:1555px;top:752px;width:61px;height:1px;background:#D0D0D0;"></div><div style="left:1555px;top:816px;width:61px;height:1px;background:#E4E4E4;"></div><div style="left:1555px;top:881px;width:61px;height:1px;background:#E4E4E4;"></div><div style="left:1555px;top:945px;width:61px;height:1px;background:#E4E4E4;"></div><div style="left:1555px;top:1010px;width:61px;height:1px;background:#E4E4E4;"></div><div style="left:1555px;top:1074px;width:61px;height:1px;background:#E4E4E4;"></div><div style="left:1555px;top:1138px;width:61px;height:1px;background:#E4E4E4;"></div><div style="left:1555px;top:1203px;width:61px;height:1px;background:#E4E4E4;"></div><div style="left:1555px;top:1267px;width:61px;height:1px;background:#E4E4E4;"></div><div style="left:1555px;top:1332px;width:61px;height:1px;background:#E4E4E4;"></div><div style="left:1554px;top:752px;width:1px;height:614px;background:#BFBFBF;"></div><div style="left:1550px;top:752px;width:4px;height:1px;background:#BFBFBF;"></div><div style="left:1550px;top:1074px;width:4px;height:1px;background:#BFBFBF;"></div><div style="left:1509.9px;top:746px;font-size:12px;line-height:14px;letter-spacing:0.30px;color:#7F7F7F;">100%</div><div style="left:1518.5px;top:1068px;font-size:12px;line-height:14px;letter-spacing:-0.51px;color:#7F7F7F;">50%</div><div style="left:1565px;top:981px;width:40px;height:385px;background:#1F9BDA;"></div><div style="left:1566.5px;top:944px;font-size:14px;line-height:16px;letter-spacing:1.14px;font-weight:bold;color:#404040;">-35%</div><div style="left:97.5px;top:250px;font-size:36px;line-height:41px;letter-spacing:-0.40px;font-weight:bold;">Control</div><div style="left:280.5px;top:250px;font-size:36px;line-height:41px;letter-spacing:1.45px;">Web tool</div><div style="left:885.0px;top:250px;font-size:36px;line-height:41px;letter-spacing:-0.30px;">Selected Lever Level</div><div class="cl" style="left:1502px;top:244px;width:116px;height:51px;"><div style="left:-1502px;top:-244px;"><div style="left:1505.5px;top:263px;font-size:22.5px;line-height:25px;letter-spacing:0.51px;">Description</div></div></div><div style="left:97.5px;top:335px;font-size:22.5px;line-height:25px;letter-spacing:-0.12px;font-weight:bold;">Levers Webtool</div><div style="left:277.5px;top:393px;font-size:18px;line-height:20px;letter-spacing:-0.19px;font-weight:bold;">URL of current web tool lever settings</div><div style="left:277.5px;top:419px;font-size:18px;line-height:20px;letter-spacing:-0.60px;font-weight:bold;">Copied URL</div><div class="cl" style="left:881px;top:389px;width:737px;height:27px;"><div style="left:-881px;top:-389px;"><div style="left:883.5px;top:393px;font-size:18px;line-height:20px;letter-spacing:0.52px;color:#0000FF;text-decoration:underline;">https://mackaycarboncalculator.beis.gov.uk/overview/emissions-and-primary-energy-consumption</div></div></div><div class="cl" style="left:881px;top:415px;width:737px;height:27px;"><div style="left:-881px;top:-415px;"><div style="left:883.5px;top:419px;font-size:18px;line-height:20px;letter-spacing:0.52px;">https://mackaycarboncalculator.beis.gov.uk/overview/emissions-and-primary-energy-consumption</div></div></div><div class="cl" style="left:1619px;top:389px;width:217px;height:27px;"><div style="left:-1619px;top:-389px;"><div style="left:1619.0px;top:393px;font-size:18px;line-height:20px;letter-spacing:1.78px;color:#0000FF;text-decoration:underline;">111111111111111111111111111</div></div></div><div class="cl" style="left:1619px;top:415px;width:217px;height:27px;"><div style="left:-1619px;top:-415px;"><div style="left:1619.0px;top:419px;font-size:18px;line-height:20px;letter-spacing:1.78px;">111111111111111111111111111</div></div></div><div style="left:883.5px;top:445px;font-size:18px;line-height:20px;letter-spacing:0.08px;color:#0000FF;text-decoration:underline;">Decoded Copied URL Settings</div><div style="left:1308.0px;top:445px;font-size:18px;line-height:20px;letter-spacing:0.54px;">String length</div><div style="left:1589.0px;top:448px;font-size:15px;line-height:17px;letter-spacing:0.74px;">101</div><div style="left:1752.6px;top:448px;font-size:16px;line-height:17px;letter-spacing:1.00px;">45</div><div class="cl" style="left:881px;top:467px;width:424px;height:27px;"><div style="left:-881px;top:-467px;"><div style="left:883.5px;top:471px;font-size:18px;line-height:20px;letter-spacing:0.59px;color:#0000FF;text-decoration:underline;">https://mackaycarboncalculator.beis.gov.uk/overview/emissions-and-primary-energy-consumption</div></div></div><div style="left:1308.0px;top:471px;font-size:18px;line-height:20px;letter-spacing:0.52px;">String</div><div class="cl" style="left:1502px;top:467px;width:116px;height:27px;"><div style="left:-1502px;top:-467px;"><div style="left:1504.5px;top:471px;font-size:18px;line-height:20px;letter-spacing:0.84px;color:#0000FF;text-decoration:underline;">https://mackaycarboncalculator.beis.gov.uk/overview/emissions-and-primary-energy-consumption</div></div></div><div class="cl" style="left:1619px;top:467px;width:155px;height:25px;"><div style="left:-1619px;top:-467px;"><div style="left:1621.5px;top:473px;font-size:16px;line-height:17px;letter-spacing:0.24px;">aaabaaabaaabaaaaa</div></div></div><div class="cl" style="left:1775px;top:467px;width:61px;height:25px;"><div style="left:-1775px;top:-467px;"><div style="left:1777.5px;top:473px;font-size:16px;line-height:17px;letter-spacing:0.16px;">ggggggggggggg</div></div></div><div style="left:277.5px;top:549px;font-size:18px;line-height:20px;letter-spacing:0.79px;">output.lever.names</div><div class="cl" style="left:881px;top:545px;width:74px;height:25px;"><div style="left:-881px;top:-545px;"><div style="left:883.5px;top:549px;font-size:18px;line-height:20px;letter-spacing:0.97px;">input.lever.ambition</div></div></div><div class="cl" style="left:956px;top:545px;width:129px;height:25px;"><div style="left:-956px;top:-545px;"><div style="left:958.5px;top:549px;font-size:18px;line-height:20px;letter-spacing:0.91px;">input.lever.start</div></div></div><div style="left:1088.5px;top:549px;font-size:18px;line-height:20px;letter-spacing:0.89px;">input.lever.end</div><div class="cl" style="left:1619px;top:545px;width:217px;height:25px;"><div style="left:-1619px;top:-545px;"><div style="left:1613.5px;top:549px;font-size:18px;line-height:20px;letter-spacing:1.31px;">ptions</div></div></div><div style="left:277.5px;top:575px;font-size:18px;line-height:20px;letter-spacing:-0.27px;font-weight:bold;">Lever Name</div><div class="cl" style="left:881px;top:571px;width:74px;height:24px;"><div style="left:-881px;top:-571px;"><div style="left:883.5px;top:575px;font-size:18px;line-height:20px;letter-spacing:0.23px;font-weight:bold;">Ambition</div></div></div><div style="left:958.5px;top:575px;font-size:18px;line-height:20px;letter-spacing:0.15px;font-weight:bold;">Start</div><div style="left:1033.5px;top:575px;font-size:18px;line-height:20px;letter-spacing:-0.35px;font-weight:bold;">Speed</div><div style="left:1088.5px;top:575px;font-size:18px;line-height:20px;letter-spacing:-1.00px;font-weight:bold;">End</div><div style="left:1167.5px;top:575px;font-size:18px;line-height:20px;letter-spacing:0.23px;font-weight:bold;">Ambition</div><div style="left:1308.5px;top:575px;font-size:18px;line-height:20px;letter-spacing:-0.21px;font-weight:bold;">Timing</div><div class="cl" style="left:1502px;top:571px;width:116px;height:24px;"><div style="left:-1502px;top:-571px;"><div style="left:1505.5px;top:575px;font-size:18px;line-height:20px;letter-spacing:0.44px;">Description Code</div></div></div><div style="left:1622.5px;top:575px;font-size:18px;line-height:20px;letter-spacing:-0.41px;font-weight:bold;">Level 1</div><div class="cl" style="left:1775px;top:571px;width:61px;height:24px;"><div style="left:-1775px;top:-571px;"><div style="left:1778.5px;top:575px;font-size:18px;line-height:20px;letter-spacing:-0.41px;font-weight:bold;">Level 2</div></div></div><div class="cl" style="left:126px;top:598px;width:148px;height:27px;"><div style="left:-126px;top:-598px;"><div style="left:128.5px;top:602px;font-size:18px;line-height:20px;letter-spacing:0.07px;font-weight:bold;">Transport</div></div></div><div class="cl" style="left:126px;top:911px;width:148px;height:27px;"><div style="left:-126px;top:-911px;"><div style="left:128.5px;top:915px;font-size:18px;line-height:20px;letter-spacing:-0.55px;font-weight:bold;">Buildings</div></div></div><div class="cl" style="left:126px;top:1120px;width:148px;height:27px;"><div style="left:-126px;top:-1120px;"><div style="left:128.5px;top:1124px;font-size:18px;line-height:20px;letter-spacing:-0.06px;font-weight:bold;">Industry</div></div></div><div class="cl" style="left:126px;top:1251px;width:148px;height:27px;"><div style="left:-126px;top:-1251px;"><div style="left:128.5px;top:1255px;font-size:18px;line-height:20px;letter-spacing:-0.42px;font-weight:bold;">CO2 Removal &amp; Gases</div></div></div><div style="left:277.5px;top:602px;font-size:18px;line-height:20px;letter-spacing:0.42px;">UK Transport Demand</div><div style="left:942.5px;top:602px;font-size:18px;line-height:20px;letter-spacing:-0.01px;">1</div><div style="left:985.9px;top:602px;font-size:18px;line-height:20px;letter-spacing:0.52px;">2020</div><div style="left:1064.7px;top:604px;font-size:16px;line-height:17px;letter-spacing:0.00px;">30</div><div style="left:1119.9px;top:602px;font-size:18px;line-height:20px;letter-spacing:0.52px;">2050</div><div class="cl" style="left:1619px;top:598px;width:155px;height:27px;"><div style="left:-1619px;top:-598px;"><div style="left:1622.5px;top:602px;font-size:18px;line-height:20px;letter-spacing:0.10px;">By 2050 the average person travels</div></div></div><div class="cl" style="left:1775px;top:598px;width:61px;height:27px;"><div style="left:-1775px;top:-598px;"><div style="left:1778.5px;top:602px;font-size:18px;line-height:20px;letter-spacing:-0.15px;">By 2050 the</div></div></div><div style="left:277.5px;top:628px;font-size:18px;line-height:20px;letter-spacing:0.94px;">International Aviation</div><div style="left:942.5px;top:628px;font-size:18px;line-height:20px;letter-spacing:-0.01px;">1</div><div style="left:985.9px;top:628px;font-size:18px;line-height:20px;letter-spacing:0.52px;">2020</div><div style="left:1064.7px;top:630px;font-size:16px;line-height:17px;letter-spacing:0.00px;">30</div><div style="left:1119.9px;top:628px;font-size:18px;line-height:20px;letter-spacing:0.52px;">2050</div><div class="cl" style="left:1619px;top:624px;width:155px;height:27px;"><div style="left:-1619px;top:-624px;"><div style="left:1622.5px;top:628px;font-size:18px;line-height:20px;letter-spacing:0.10px;">By 2050 the average person flies</div></div></div><div class="cl" style="left:1775px;top:624px;width:61px;height:27px;"><div style="left:-1775px;top:-624px;"><div style="left:1778.5px;top:628px;font-size:18px;line-height:20px;letter-spacing:-0.15px;">By 2050 the</div></div></div><div style="left:277.5px;top:654px;font-size:18px;line-height:20px;letter-spacing:0.19px;">Light Vehicles - Electric</div><div style="left:942.5px;top:654px;font-size:18px;line-height:20px;letter-spacing:-0.01px;">1</div><div style="left:985.9px;top:654px;font-size:18px;line-height:20px;letter-spacing:0.52px;">2020</div><div style="left:1064.7px;top:656px;font-size:16px;line-height:17px;letter-spacing:0.00px;">30</div><div style="left:1119.9px;top:654px;font-size:18px;line-height:20px;letter-spacing:0.52px;">2050</div><div class="cl" style="left:1619px;top:650px;width:155px;height:27px;"><div style="left:-1619px;top:-650px;"><div style="left:1622.5px;top:654px;font-size:18px;line-height:20px;letter-spacing:-0.00px;">0% of cars are electric</div></div></div><div class="cl" style="left:1775px;top:650px;width:61px;height:27px;"><div style="left:-1775px;top:-650px;"><div style="left:1778.5px;top:654px;font-size:18px;line-height:20px;letter-spacing:-0.01px;">50% of cars</div></div></div><div style="left:277.5px;top:680px;font-size:18px;line-height:20px;letter-spacing:0.23px;">Light Vehicles - Hydrogen</div><div style="left:942.5px;top:680px;font-size:18px;line-height:20px;letter-spacing:-0.01px;">1</div><div style="left:985.9px;top:680px;font-size:18px;line-height:20px;letter-spacing:0.52px;">2025</div><div style="left:1064.7px;top:682px;font-size:16px;line-height:17px;letter-spacing:0.00px;">25</div><div style="left:1119.9px;top:680px;font-size:18px;line-height:20px;letter-spacing:0.52px;">2050</div><div class="cl" style="left:1619px;top:676px;width:155px;height:27px;"><div style="left:-1619px;top:-676px;"><div style="left:1622.5px;top:680px;font-size:18px;line-height:20px;letter-spacing:0.11px;">0% of cars are hydrogen</div></div></div><div class="cl" style="left:1775px;top:676px;width:61px;height:27px;"><div style="left:-1775px;top:-676px;"><div style="left:1778.5px;top:680px;font-size:18px;line-height:20px;letter-spacing:-0.01px;">33% of cars</div></div></div><div style="left:277.5px;top:706px;font-size:18px;line-height:20px;letter-spacing:0.30px;">Light Vehicles - Hybrid</div><div style="left:942.5px;top:706px;font-size:18px;line-height:20px;letter-spacing:-0.01px;">1</div><div style="left:985.9px;top:706px;font-size:18px;line-height:20px;letter-spacing:0.52px;">2020</div><div style="left:1064.7px;top:708px;font-size:16px;line-height:17px;letter-spacing:0.00px;">30</div><div style="left:1119.9px;top:706px;font-size:18px;line-height:20px;letter-spacing:0.52px;">2050</div><div class="cl" style="left:1619px;top:702px;width:155px;height:27px;"><div style="left:-1619px;top:-702px;"><div style="left:1622.5px;top:706px;font-size:18px;line-height:20px;letter-spacing:0.11px;">0% of cars are hybrid</div></div></div><div class="cl" style="left:1775px;top:702px;width:61px;height:27px;"><div style="left:-1775px;top:-702px;"><div style="left:1778.5px;top:706px;font-size:18px;line-height:20px;letter-spacing:-0.01px;">33% of cars</div></div></div><div style="left:277.5px;top:732px;font-size:18px;line-height:20px;letter-spacing:0.33px;">Light Vehicles - Biofuel</div><div style="left:942.5px;top:732px;font-size:18px;line-height:20px;letter-spacing:-0.01px;">1</div><div style="left:985.9px;top:732px;font-size:18px;line-height:20px;letter-spacing:0.52px;">2020</div><div style="left:1064.7px;top:734px;font-size:16px;line-height:17px;letter-spacing:0.00px;">30</div><div style="left:1119.9px;top:732px;font-size:18px;line-height:20px;letter-spacing:0.52px;">2050</div><div class="cl" style="left:1619px;top:728px;width:155px;height:27px;"><div style="left:-1619px;top:-728px;"><div style="left:1622.5px;top:732px;font-size:18px;line-height:20px;letter-spacing:0.33px;">3% of fuel used in</div></div></div><div class="cl" style="left:1775px;top:728px;width:61px;height:27px;"><div style="left:-1775px;top:-728px;"><div style="left:1778.5px;top:732px;font-size:18px;line-height:20px;letter-spacing:-0.01px;">25% of fuel</div></div></div><div style="left:277.5px;top:758px;font-size:18px;line-height:20px;letter-spacing:0.11px;">Heavy Vehicles - Electric</div><div style="left:942.5px;top:758px;font-size:18px;line-height:20px;letter-spacing:-0.01px;">1</div><div style="left:985.9px;top:758px;font-size:18px;line-height:20px;letter-spacing:0.52px;">2020</div><div style="left:1064.7px;top:760px;font-size:16px;line-height:17px;letter-spacing:0.00px;">30</div><div style="left:1119.9px;top:758px;font-size:18px;line-height:20px;letter-spacing:0.52px;">2050</div><div class="cl" style="left:1619px;top:754px;width:155px;height:27px;"><div style="left:-1619px;top:-754px;"><div style="left:1622.5px;top:758px;font-size:18px;line-height:20px;letter-spacing:0.15px;">0% of large trucks,</div></div></div><div class="cl" style="left:1775px;top:754px;width:61px;height:27px;"><div style="left:-1775px;top:-754px;"><div style="left:1778.5px;top:758px;font-size:18px;line-height:20px;letter-spacing:0.12px;">2% of large</div></div></div><div style="left:277.5px;top:784px;font-size:18px;line-height:20px;letter-spacing:0.15px;">Heavy Vehicles - Hydrogen</div><div style="left:942.5px;top:784px;font-size:18px;line-height:20px;letter-spacing:-0.01px;">1</div><div style="left:985.9px;top:784px;font-size:18px;line-height:20px;letter-spacing:0.52px;">2025</div><div style="left:1064.7px;top:786px;font-size:16px;line-height:17px;letter-spacing:0.00px;">25</div><div style="left:1119.9px;top:784px;font-size:18px;line-height:20px;letter-spacing:0.52px;">2050</div><div class="cl" style="left:1619px;top:780px;width:155px;height:27px;"><div style="left:-1619px;top:-780px;"><div style="left:1622.5px;top:784px;font-size:18px;line-height:20px;letter-spacing:0.16px;">0% of large trucks</div></div></div><div class="cl" style="left:1775px;top:780px;width:61px;height:27px;"><div style="left:-1775px;top:-780px;"><div style="left:1778.5px;top:784px;font-size:18px;line-height:20px;letter-spacing:-0.01px;">50% of large</div></div></div><div style="left:277.5px;top:810px;font-size:18px;line-height:20px;letter-spacing:0.21px;">Heavy Vehicles - Hybrid</div><div style="left:942.5px;top:810px;font-size:18px;line-height:20px;letter-spacing:-0.01px;">1</div><div style="left:985.9px;top:810px;font-size:18px;line-height:20px;letter-spacing:0.52px;">2020</div><div style="left:1064.7px;top:812px;font-size:16px;line-height:17px;letter-spacing:0.00px;">30</div><div style="left:1119.9px;top:810px;font-size:18px;line-height:20px;letter-spacing:0.52px;">2050</div><div class="cl" style="left:1619px;top:806px;width:155px;height:27px;"><div style="left:-1619px;top:-806px;"><div style="left:1622.5px;top:810px;font-size:18px;line-height:20px;letter-spacing:0.16px;">0% of large trucks</div></div></div><div class="cl" style="left:1775px;top:806px;width:61px;height:27px;"><div style="left:-1775px;top:-806px;"><div style="left:1778.5px;top:810px;font-size:18px;line-height:20px;letter-spacing:-0.01px;">25% of large</div></div></div><div style="left:277.5px;top:836px;font-size:18px;line-height:20px;letter-spacing:0.24px;">Heavy Vehicles - Biofuel</div><div style="left:942.5px;top:836px;font-size:18px;line-height:20px;letter-spacing:-0.01px;">1</div><div style="left:985.9px;top:836px;font-size:18px;line-height:20px;letter-spacing:0.52px;">2020</div><div style="left:1064.7px;top:838px;font-size:16px;line-height:17px;letter-spacing:0.00px;">30</div><div style="left:1119.9px;top:836px;font-size:18px;line-height:20px;letter-spacing:0.52px;">2050</div><div class="cl" style="left:1619px;top:832px;width:155px;height:27px;"><div style="left:-1619px;top:-832px;"><div style="left:1622.5px;top:836px;font-size:18px;line-height:20px;letter-spacing:0.33px;">2% of fuel used in</div></div></div><div class="cl" style="left:1775px;top:832px;width:61px;height:27px;"><div style="left:-1775px;top:-832px;"><div style="left:1778.5px;top:836px;font-size:18px;line-height:20px;letter-spacing:-0.01px;">25% of fuel</div></div></div><div style="left:277.5px;top:862px;font-size:18px;line-height:20px;letter-spacing:0.51px;">Aviation Efficiency</div><div style="left:942.5px;top:862px;font-size:18px;line-height:20px;letter-spacing:-0.01px;">1</div><div style="left:985.9px;top:862px;font-size:18px;line-height:20px;letter-spacing:0.52px;">2020</div><div style="left:1064.7px;top:864px;font-size:16px;line-height:17px;letter-spacing:0.00px;">30</div><div style="left:1119.9px;top:862px;font-size:18px;line-height:20px;letter-spacing:0.52px;">2050</div><div class="cl" style="left:1619px;top:858px;width:155px;height:27px;"><div style="left:-1619px;top:-858px;"><div style="left:1622.5px;top:862px;font-size:18px;line-height:20px;letter-spacing:0.21px;">Aircrafts are 18% more</div></div></div><div class="cl" style="left:1775px;top:858px;width:61px;height:27px;"><div style="left:-1775px;top:-858px;"><div style="left:1778.5px;top:862px;font-size:18px;line-height:20px;letter-spacing:0.62px;">Aircrafts are</div></div></div><div style="left:277.5px;top:888px;font-size:18px;line-height:20px;letter-spacing:0.79px;">Aviation Biofuel</div><div style="left:942.5px;top:888px;font-size:18px;line-height:20px;letter-spacing:-0.01px;">1</div><div style="left:985.9px;top:888px;font-size:18px;line-height:20px;letter-spacing:0.52px;">2025</div><div style="left:1064.7px;top:890px;font-size:16px;line-height:17px;letter-spacing:0.00px;">25</div><div style="left:1119.9px;top:888px;font-size:18px;line-height:20px;letter-spacing:0.52px;">2050</div><div class="cl" style="left:1619px;top:884px;width:155px;height:28px;"><div style="left:-1619px;top:-884px;"><div style="left:1622.5px;top:888px;font-size:18px;line-height:20px;letter-spacing:0.52px;">0% of liquid fuel used</div></div></div><div class="cl" style="left:1775px;top:884px;width:61px;height:28px;"><div style="left:-1775px;top:-884px;"><div style="left:1778.5px;top:888px;font-size:18px;line-height:20px;letter-spacing:-0.01px;">10% of liquid</div></div></div><div style="left:277.5px;top:915px;font-size:18px;line-height:20px;letter-spacing:0.64px;">Buildings Temperature</div><div style="left:942.5px;top:915px;font-size:18px;line-height:20px;letter-spacing:-0.01px;">1</div><div style="left:985.9px;top:915px;font-size:18px;line-height:20px;letter-spacing:0.52px;">2020</div><div style="left:1064.7px;top:917px;font-size:16px;line-height:17px;letter-spacing:0.00px;">30</div><div style="left:1119.9px;top:915px;font-size:18px;line-height:20px;letter-spacing:0.52px;">2050</div><div class="cl" style="left:1619px;top:911px;width:155px;height:27px;"><div style="left:-1619px;top:-911px;"><div style="left:1622.5px;top:915px;font-size:18px;line-height:20px;letter-spacing:0.16px;">By 2050, the average</div></div></div><div class="cl" style="left:1775px;top:911px;width:61px;height:27px;"><div style="left:-1775px;top:-911px;"><div style="left:1778.5px;top:915px;font-size:18px;line-height:20px;letter-spacing:-0.15px;">By 2050, the</div></div></div><div style="left:277.5px;top:941px;font-size:18px;line-height:20px;letter-spacing:0.60px;">Buildings Insulation</div><div style="left:942.5px;top:941px;font-size:18px;line-height:20px;letter-spacing:-0.01px;">1</div><div style="left:985.9px;top:941px;font-size:18px;line-height:20px;letter-spacing:0.52px;">2020</div><div style="left:1064.7px;top:943px;font-size:16px;line-height:17px;letter-spacing:0.00px;">20</div><div style="left:1119.9px;top:941px;font-size:18px;line-height:20px;letter-spacing:0.52px;">2040</div><div class="cl" style="left:1619px;top:937px;width:155px;height:27px;"><div style="left:-1619px;top:-937px;"><div style="left:1622.5px;top:941px;font-size:18px;line-height:20px;letter-spacing:0.36px;">By 2040, insulation of</div></div></div><div class="cl" style="left:1775px;top:937px;width:61px;height:27px;"><div style="left:-1775px;top:-937px;"><div style="left:1778.5px;top:941px;font-size:18px;line-height:20px;letter-spacing:-0.15px;">By 2040, insul</div></div></div><div style="left:277.5px;top:967px;font-size:18px;line-height:20px;letter-spacing:0.31px;">District Heat Share</div><div style="left:942.5px;top:967px;font-size:18px;line-height:20px;letter-spacing:-0.01px;">1</div><div style="left:985.9px;top:967px;font-size:18px;line-height:20px;letter-spacing:0.52px;">2020</div><div style="left:1064.7px;top:969px;font-size:16px;line-height:17px;letter-spacing:0.00px;">30</div><div style="left:1119.9px;top:967px;font-size:18px;line-height:20px;letter-spacing:0.52px;">2050</div><div class="cl" style="left:1619px;top:963px;width:155px;height:27px;"><div style="left:-1619px;top:-963px;"><div style="left:1622.5px;top:967px;font-size:18px;line-height:20px;letter-spacing:0.23px;">4% of homes are heated</div></div></div><div class="cl" style="left:1775px;top:963px;width:61px;height:27px;"><div style="left:-1775px;top:-963px;"><div style="left:1778.5px;top:967px;font-size:18px;line-height:20px;letter-spacing:-0.01px;">20% of homes</div></div></div><div style="left:277.5px;top:993px;font-size:18px;line-height:20px;letter-spacing:0.18px;">Heat Pump Share</div><div style="left:942.5px;top:993px;font-size:18px;line-height:20px;letter-spacing:-0.01px;">1</div><div style="left:985.9px;top:993px;font-size:18px;line-height:20px;letter-spacing:0.52px;">2020</div><div style="left:1064.7px;top:995px;font-size:16px;line-height:17px;letter-spacing:0.00px;">30</div><div style="left:1119.9px;top:993px;font-size:18px;line-height:20px;letter-spacing:0.52px;">2050</div><div class="cl" style="left:1619px;top:989px;width:155px;height:27px;"><div style="left:-1619px;top:-989px;"><div style="left:1622.5px;top:993px;font-size:18px;line-height:20px;letter-spacing:0.23px;">0% of homes are heated</div></div></div><div class="cl" style="left:1775px;top:989px;width:61px;height:27px;"><div style="left:-1775px;top:-989px;"><div style="left:1778.5px;top:993px;font-size:18px;line-height:20px;letter-spacing:-0.01px;">20% of homes</div></div></div><div style="left:277.5px;top:1019px;font-size:18px;line-height:20px;letter-spacing:0.28px;">Hybrid Heat Share</div><div style="left:942.5px;top:1019px;font-size:18px;line-height:20px;letter-spacing:-0.01px;">1</div><div style="left:985.9px;top:1019px;font-size:18px;line-height:20px;letter-spacing:0.52px;">2020</div><div style="left:1064.7px;top:1021px;font-size:16px;line-height:17px;letter-spacing:0.00px;">30</div><div style="left:1119.9px;top:1019px;font-size:18px;line-height:20px;letter-spacing:0.52px;">2050</div><div class="cl" style="left:1619px;top:1015px;width:155px;height:27px;"><div style="left:-1619px;top:-1015px;"><div style="left:1622.5px;top:1019px;font-size:18px;line-height:20px;letter-spacing:0.23px;">0% of homes are heated</div></div></div><div class="cl" style="left:1775px;top:1015px;width:61px;height:27px;"><div style="left:-1775px;top:-1015px;"><div style="left:1778.5px;top:1019px;font-size:18px;line-height:20px;letter-spacing:-0.01px;">25% of homes</div></div></div><div style="left:277.5px;top:1045px;font-size:18px;line-height:20px;letter-spacing:0.47px;">Network - Heat Pump</div><div style="left:942.5px;top:1045px;font-size:18px;line-height:20px;letter-spacing:-0.01px;">1</div><div style="left:985.9px;top:1045px;font-size:18px;line-height:20px;letter-spacing:0.52px;">2020</div><div style="left:1064.7px;top:1047px;font-size:16px;line-height:17px;letter-spacing:0.00px;">30</div><div style="left:1119.9px;top:1045px;font-size:18px;line-height:20px;letter-spacing:0.52px;">2050</div><div class="cl" style="left:1619px;top:1041px;width:155px;height:27px;"><div style="left:-1619px;top:-1041px;"><div style="left:1622.5px;top:1045px;font-size:18px;line-height:20px;letter-spacing:0.31px;">Heat Pumps do not</div></div></div><div class="cl" style="left:1775px;top:1041px;width:61px;height:27px;"><div style="left:-1775px;top:-1041px;"><div style="left:1778.5px;top:1045px;font-size:18px;line-height:20px;letter-spacing:0.22px;">70 TWh of heat</div></div></div><div style="left:277.5px;top:1071px;font-size:18px;line-height:20px;letter-spacing:0.36px;">Heat Network - Biomass</div><div style="left:942.5px;top:1071px;font-size:18px;line-height:20px;letter-spacing:-0.01px;">1</div><div style="left:985.9px;top:1071px;font-size:18px;line-height:20px;letter-spacing:0.52px;">2020</div><div style="left:1064.7px;top:1073px;font-size:16px;line-height:17px;letter-spacing:0.00px;">30</div><div style="left:1119.9px;top:1071px;font-size:18px;line-height:20px;letter-spacing:0.52px;">2050</div><div class="cl" style="left:1619px;top:1067px;width:155px;height:27px;"><div style="left:-1619px;top:-1067px;"><div style="left:1622.5px;top:1071px;font-size:18px;line-height:20px;letter-spacing:-0.23px;">Biomass CHP does not</div></div></div><div class="cl" style="left:1775px;top:1067px;width:61px;height:27px;"><div style="left:-1775px;top:-1067px;"><div style="left:1778.5px;top:1071px;font-size:18px;line-height:20px;letter-spacing:0.22px;">25 TWh of heat</div></div></div><div style="left:277.5px;top:1097px;font-size:18px;line-height:20px;letter-spacing:0.43px;">Lighting and Appliances</div><div style="left:942.5px;top:1097px;font-size:18px;line-height:20px;letter-spacing:-0.01px;">1</div><div style="left:985.9px;top:1097px;font-size:18px;line-height:20px;letter-spacing:0.52px;">2020</div><div style="left:1064.7px;top:1099px;font-size:16px;line-height:17px;letter-spacing:0.00px;">30</div><div style="left:1119.9px;top:1097px;font-size:18px;line-height:20px;letter-spacing:0.52px;">2050</div><div class="cl" style="left:1619px;top:1093px;width:155px;height:28px;"><div style="left:-1619px;top:-1093px;"><div style="left:1622.5px;top:1097px;font-size:18px;line-height:20px;letter-spacing:0.17px;">By 2050, compared to</div></div></div><div class="cl" style="left:1775px;top:1093px;width:61px;height:28px;"><div style="left:-1775px;top:-1093px;"><div style="left:1778.5px;top:1097px;font-size:18px;line-height:20px;letter-spacing:-0.15px;">By 2050, comp</div></div></div><div style="left:277.5px;top:1124px;font-size:18px;line-height:20px;letter-spacing:0.49px;">Industrial Efficiency</div><div style="left:942.5px;top:1124px;font-size:18px;line-height:20px;letter-spacing:-0.01px;">1</div><div style="left:985.9px;top:1124px;font-size:18px;line-height:20px;letter-spacing:0.52px;">2020</div><div style="left:1064.7px;top:1126px;font-size:16px;line-height:17px;letter-spacing:0.00px;">30</div><div style="left:1119.9px;top:1124px;font-size:18px;line-height:20px;letter-spacing:0.52px;">2050</div><div class="cl" style="left:1619px;top:1120px;width:155px;height:27px;"><div style="left:-1619px;top:-1120px;"><div style="left:1622.5px;top:1124px;font-size:18px;line-height:20px;letter-spacing:0.11px;">No change to 13% less</div></div></div><div class="cl" style="left:1775px;top:1120px;width:61px;height:27px;"><div style="left:-1775px;top:-1120px;"><div style="left:1778.5px;top:1124px;font-size:18px;line-height:20px;letter-spacing:0.16px;">No change</div></div></div><div style="left:277.5px;top:1150px;font-size:18px;line-height:20px;letter-spacing:0.63px;">Industry Electrification</div><div style="left:942.5px;top:1150px;font-size:18px;line-height:20px;letter-spacing:-0.01px;">1</div><div style="left:985.9px;top:1150px;font-size:18px;line-height:20px;letter-spacing:0.52px;">2020</div><div style="left:1064.7px;top:1152px;font-size:16px;line-height:17px;letter-spacing:0.00px;">30</div><div style="left:1119.9px;top:1150px;font-size:18px;line-height:20px;letter-spacing:0.52px;">2050</div><div class="cl" style="left:1619px;top:1146px;width:155px;height:27px;"><div style="left:-1619px;top:-1146px;"><div style="left:1622.5px;top:1150px;font-size:18px;line-height:20px;letter-spacing:0.22px;">3% to 20% of heat is</div></div></div><div class="cl" style="left:1775px;top:1146px;width:61px;height:27px;"><div style="left:-1775px;top:-1146px;"><div style="left:1778.5px;top:1150px;font-size:18px;line-height:20px;letter-spacing:0.14px;">21% to 50%</div></div></div><div style="left:277.5px;top:1176px;font-size:18px;line-height:20px;letter-spacing:0.48px;">Industry Shift to Biomass</div><div style="left:942.5px;top:1176px;font-size:18px;line-height:20px;letter-spacing:-0.01px;">1</div><div style="left:985.9px;top:1176px;font-size:18px;line-height:20px;letter-spacing:0.52px;">2020</div><div style="left:1064.7px;top:1178px;font-size:16px;line-height:17px;letter-spacing:0.00px;">30</div><div style="left:1119.9px;top:1176px;font-size:18px;line-height:20px;letter-spacing:0.52px;">2050</div><div class="cl" style="left:1619px;top:1172px;width:155px;height:27px;"><div style="left:-1619px;top:-1172px;"><div style="left:1622.5px;top:1176px;font-size:18px;line-height:20px;letter-spacing:0.16px;">0% to 8% of heat generated</div></div></div><div class="cl" style="left:1775px;top:1172px;width:61px;height:27px;"><div style="left:-1775px;top:-1172px;"><div style="left:1778.5px;top:1176px;font-size:18px;line-height:20px;letter-spacing:0.14px;">23% to 50%</div></div></div><div style="left:277.5px;top:1202px;font-size:18px;line-height:20px;letter-spacing:0.48px;">Industry Shift to Gas</div><div style="left:942.5px;top:1202px;font-size:18px;line-height:20px;letter-spacing:-0.01px;">1</div><div style="left:985.9px;top:1202px;font-size:18px;line-height:20px;letter-spacing:0.52px;">2020</div><div style="left:1064.7px;top:1204px;font-size:16px;line-height:17px;letter-spacing:0.00px;">30</div><div style="left:1119.9px;top:1202px;font-size:18px;line-height:20px;letter-spacing:0.52px;">2050</div><div class="cl" style="left:1619px;top:1198px;width:155px;height:27px;"><div style="left:-1619px;top:-1198px;"><div style="left:1622.5px;top:1202px;font-size:18px;line-height:20px;letter-spacing:0.22px;">3% to 74% of heat is</div></div></div><div class="cl" style="left:1775px;top:1198px;width:61px;height:27px;"><div style="left:-1775px;top:-1198px;"><div style="left:1778.5px;top:1202px;font-size:18px;line-height:20px;letter-spacing:0.14px;">32% to 60%</div></div></div><div style="left:277.5px;top:1228px;font-size:18px;line-height:20px;letter-spacing:-0.04px;">Industry CCS</div><div style="left:942.5px;top:1228px;font-size:18px;line-height:20px;letter-spacing:-0.01px;">1</div><div style="left:985.9px;top:1228px;font-size:18px;line-height:20px;letter-spacing:0.52px;">2025</div><div style="left:1064.7px;top:1230px;font-size:16px;line-height:17px;letter-spacing:0.00px;">35</div><div style="left:1119.9px;top:1228px;font-size:18px;line-height:20px;letter-spacing:0.52px;">2060</div><div class="cl" style="left:1619px;top:1224px;width:155px;height:28px;"><div style="left:-1619px;top:-1224px;"><div style="left:1622.5px;top:1228px;font-size:18px;line-height:20px;letter-spacing:-0.01px;">0% of processes have</div></div></div><div class="cl" style="left:1775px;top:1224px;width:61px;height:28px;"><div style="left:-1775px;top:-1224px;"><div style="left:1778.5px;top:1228px;font-size:18px;line-height:20px;letter-spacing:0.14px;">23% to 40%</div></div></div><div style="left:277.5px;top:1255px;font-size:18px;line-height:20px;letter-spacing:0.11px;">Hydrogen Gas Grid Share</div><div style="left:942.5px;top:1255px;font-size:18px;line-height:20px;letter-spacing:-0.01px;">1</div><div style="left:985.9px;top:1255px;font-size:18px;line-height:20px;letter-spacing:0.52px;">2025</div><div style="left:1064.7px;top:1257px;font-size:16px;line-height:17px;letter-spacing:0.00px;">25</div><div style="left:1119.9px;top:1255px;font-size:18px;line-height:20px;letter-spacing:0.52px;">2050</div><div class="cl" style="left:1619px;top:1251px;width:155px;height:27px;"><div style="left:-1619px;top:-1251px;"><div style="left:1622.5px;top:1255px;font-size:18px;line-height:20px;letter-spacing:0.16px;">0% of the gas grid</div></div></div><div class="cl" style="left:1775px;top:1251px;width:61px;height:27px;"><div style="left:-1775px;top:-1251px;"><div style="left:1778.5px;top:1255px;font-size:18px;line-height:20px;letter-spacing:-0.01px;">33% of the</div></div></div><div style="left:277.5px;top:1281px;font-size:18px;line-height:20px;letter-spacing:0.27px;">Biomethane Gas Grid Share</div><div style="left:942.5px;top:1281px;font-size:18px;line-height:20px;letter-spacing:-0.01px;">1</div><div style="left:985.9px;top:1281px;font-size:18px;line-height:20px;letter-spacing:0.52px;">2020</div><div style="left:1064.7px;top:1283px;font-size:16px;line-height:17px;letter-spacing:0.00px;">30</div><div style="left:1119.9px;top:1281px;font-size:18px;line-height:20px;letter-spacing:0.52px;">2050</div><div class="cl" style="left:1619px;top:1277px;width:155px;height:27px;"><div style="left:-1619px;top:-1277px;"><div style="left:1622.5px;top:1281px;font-size:18px;line-height:20px;letter-spacing:0.16px;">0.5% of the gas in</div></div></div><div class="cl" style="left:1775px;top:1277px;width:61px;height:27px;"><div style="left:-1775px;top:-1277px;"><div style="left:1778.5px;top:1281px;font-size:18px;line-height:20px;letter-spacing:0.28px;">5% of the gas</div></div></div><div style="left:277.5px;top:1307px;font-size:18px;line-height:20px;letter-spacing:-0.17px;">Hydrogen - Biomass CCS</div><div style="left:942.5px;top:1307px;font-size:18px;line-height:20px;letter-spacing:-0.01px;">1</div><div style="left:985.9px;top:1307px;font-size:18px;line-height:20px;letter-spacing:0.52px;">2025</div><div style="left:1064.7px;top:1309px;font-size:16px;line-height:17px;letter-spacing:0.00px;">35</div><div style="left:1119.9px;top:1307px;font-size:18px;line-height:20px;letter-spacing:0.52px;">2060</div><div class="cl" style="left:1619px;top:1303px;width:155px;height:27px;"><div style="left:-1619px;top:-1303px;"><div style="left:1622.5px;top:1307px;font-size:18px;line-height:20px;letter-spacing:0.44px;">No hydrogen is produced</div></div></div><div class="cl" style="left:1775px;top:1303px;width:61px;height:27px;"><div style="left:-1775px;top:-1303px;"><div style="left:1778.5px;top:1307px;font-size:18px;line-height:20px;letter-spacing:0.22px;">50 TWh of</div></div></div><div style="left:277.5px;top:1333px;font-size:18px;line-height:20px;letter-spacing:0.12px;">Hydrogen - Methane CCS</div><div style="left:942.5px;top:1333px;font-size:18px;line-height:20px;letter-spacing:-0.01px;">1</div><div style="left:985.9px;top:1333px;font-size:18px;line-height:20px;letter-spacing:0.52px;">2025</div><div style="left:1064.7px;top:1335px;font-size:16px;line-height:17px;letter-spacing:0.00px;">35</div><div style="left:1119.9px;top:1333px;font-size:18px;line-height:20px;letter-spacing:0.52px;">2060</div><div class="cl" style="left:1619px;top:1329px;width:155px;height:27px;"><div style="left:-1619px;top:-1329px;"><div style="left:1622.5px;top:1333px;font-size:18px;line-height:20px;letter-spacing:0.44px;">No hydrogen is produced</div></div></div><div class="cl" style="left:1775px;top:1329px;width:61px;height:27px;"><div style="left:-1775px;top:-1329px;"><div style="left:1778.5px;top:1333px;font-size:18px;line-height:20px;letter-spacing:0.05px;">188 TWh of</div></div></div><div style="left:277.5px;top:1359px;font-size:18px;line-height:20px;letter-spacing:0.50px;">Hydrogen - Imports</div><div style="left:942.5px;top:1359px;font-size:18px;line-height:20px;letter-spacing:-0.01px;">1</div><div style="left:985.9px;top:1359px;font-size:18px;line-height:20px;letter-spacing:0.52px;">2025</div><div style="left:1064.7px;top:1361px;font-size:16px;line-height:17px;letter-spacing:0.00px;">35</div><div style="left:1119.9px;top:1359px;font-size:18px;line-height:20px;letter-spacing:0.52px;">2060</div><div class="cl" style="left:1619px;top:1355px;width:155px;height:27px;"><div style="left:-1619px;top:-1355px;"><div style="left:1622.5px;top:1359px;font-size:18px;line-height:20px;letter-spacing:0.41px;">No hydrogen is imported</div></div></div><div class="cl" style="left:1775px;top:1355px;width:61px;height:27px;"><div style="left:-1775px;top:-1355px;"><div style="left:1778.5px;top:1359px;font-size:18px;line-height:20px;letter-spacing:0.05px;">128 TWh of</div></div></div><div style="left:956px;top:294px;width:209px;height:35px;border:2px solid #000;border-left:none;box-sizing:border-box;"></div><div style="left:879px;top:294px;width:78px;height:31px;border:2px solid #217346;border-bottom:none;box-sizing:border-box;"></div><div style="left:879px;top:325px;width:2px;height:4px;background:#217346;"></div><div style="left:952px;top:326px;width:6px;height:3px;background:#217346;"></div><svg style="left:0;top:0" width="1869" height="400" viewBox="0 0 1869 400" fill="#FF0000"><path d="M948 296h6v6z"/><path d="M1022 296h8v8z"/><path d="M1077 296h8v8z"/><path d="M1155 296h8v8z"/></svg></div></div><div style="left:2px;top:329px;width:1834px;height:1px;background:#9B9B9B;"></div><div style="left:1618px;top:163px;width:1px;height:1203px;background:#9B9B9B;"></div>
</div></body></html>
